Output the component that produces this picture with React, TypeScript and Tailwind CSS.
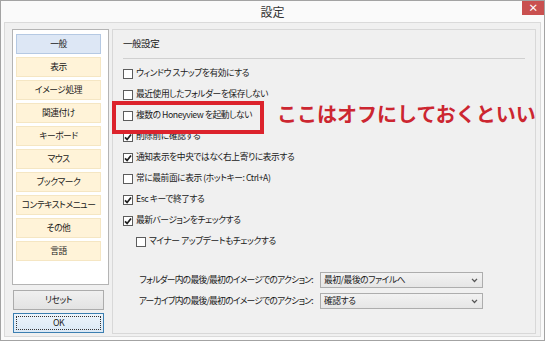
import type { ReactNode } from 'react'

const MENU = ['一般', '表示', 'イメージ処理', '関連付け', 'キーボード', 'マウス', 'ブックマーク', 'コンテキストメニュー', 'その他', '言語']

const OPTIONS: { label: ReactNode; checked: boolean; indent?: boolean }[] = [
  { label: 'ウィンドウ スナップを有効にする', checked: false },
  { label: '最近使用したフォルダーを保存しない', checked: false },
  { label: '複数の Honeyview を起動しない', checked: false },
  { label: '削除前に確認する', checked: true },
  { label: '通知表示を中央ではなく右上寄りに表示する', checked: true },
  { label: '常に最前面に表示 (ホットキー: Ctrl+A)', checked: false },
  { label: 'Esc キーで終了する', checked: true },
  { label: '最新バージョンをチェックする', checked: true },
  { label: 'マイナー アップデートもチェックする', checked: false, indent: true },
]

function CheckBox({ checked }: { checked: boolean }) {
  return (
    <span className="flex h-[10px] w-[10px] shrink-0 items-center justify-center border border-[#5c5c5c] bg-white">
      {checked && (
        <svg viewBox="0 0 8 8" className="h-[8px] w-[8px]">
          <path d="M1 4.3 L3.1 6.4 L7 1.4" stroke="#1f1f1f" strokeWidth="1.7" fill="none" />
        </svg>
      )}
    </span>
  )
}

function Select({ value }: { value: string }) {
  return (
    <div className="flex h-[16px] w-[163px] items-center justify-between border border-[#adadad] bg-gradient-to-b from-[#f2f2f2] to-[#e6e6e6] pl-[3px] pr-[4px]">
      <span className="whitespace-nowrap">{value}</span>
      <svg viewBox="0 0 8 6" className="h-[5px] w-[7px]">
        <path d="M1 1 L4 4.2 L7 1" stroke="#555" strokeWidth="1.5" fill="none" />
      </svg>
    </div>
  )
}

export default function App() {
  return (
    <div className="h-[346px] w-[550px] bg-white font-['Noto_Sans_CJK_JP','Noto_Sans',sans-serif] text-[8.75px] leading-none tracking-[-0.45px] text-[#1a1a1a] [font-feature-settings:'palt']">
      {/* window */}
      <div className="relative flex h-[341px] w-[545px] flex-col border border-[#a3a3a3] bg-[#fafafa] px-[3px] pb-[3px]">
        {/* title bar */}
        <div className="flex h-[21px] shrink-0 items-center justify-center text-[12px] tracking-normal text-[#333]">設定</div>
        <div className="absolute right-0 top-0 flex h-[14px] w-[22px] items-center justify-center bg-[#c9504f] text-[10px] font-bold text-white">
          ×
        </div>

        {/* client area */}
        <div className="flex flex-1 gap-[3px] border border-[#dadada] bg-[#f0f0f0] pb-[2px] pl-[7px] pr-[4px] pt-[6px]">
          {/* left column */}
          <div className="flex w-[97px] shrink-0 flex-col">
            <div className="flex h-[256px] flex-col gap-[3px] border border-[#b4b4b4] bg-white pl-[3px] pt-[4px]">
              {MENU.map((m, i) => (
                <div
                  key={m}
                  className={
                    i === 0
                      ? 'flex h-[20px] w-[85px] items-center justify-center border border-[#b5c9e3] bg-[#dde7f5]'
                      : 'flex h-[20px] w-[85px] items-center justify-center border border-[#f5e6c3] bg-[#fff3d8]'
                  }
                >
                  {m}
                </div>
              ))}
            </div>
            <div className="ml-[1px] mt-[5px] flex h-[20px] w-[91px] items-center justify-center border border-[#acacac] bg-gradient-to-b from-[#f0f0f0] to-[#e3e3e3]">
              リセット
            </div>
            <div className="ml-[1px] mt-[3px] flex h-[20px] w-[91px] items-center justify-center border border-[#3c7fb1] bg-gradient-to-b from-[#ecf4fb] to-[#dbe9f6] p-[2px]">
              <div className="flex h-full w-full items-center justify-center border border-dotted border-[#333]">OK</div>
            </div>
          </div>

          {/* content panel */}
          <div className="relative flex flex-1 flex-col border border-[#d8d8d8] pl-[10px] pr-[10px] pt-[7px]">
            <div className="flex h-[14px] items-center text-[9.5px]">一般設定</div>
            <div className="mt-[7px] h-px w-[402px] bg-[#d0d0d0]" />
            <div className="mt-[4px] flex flex-col">
              {OPTIONS.map((o, i) => (
                <div key={i} className={o.indent ? 'flex h-[21px] items-center gap-[3px] pl-[13px]' : 'flex h-[21px] items-center gap-[3px]'}>
                  <CheckBox checked={o.checked} />
                  <span className="whitespace-nowrap">{o.label}</span>
                </div>
              ))}
            </div>

            <div className="mt-[20px] grid grid-cols-[190px_163px] items-center gap-x-[7px] gap-y-[5px]">
              <span className="whitespace-nowrap text-right tracking-[-0.75px]">フォルダー内の最後/最初のイメージでのアクション:</span>
              <Select value="最初/最後のファイルへ" />
              <span className="whitespace-nowrap text-right tracking-[-0.75px]">アーカイブ内の最後/最初のイメージでのアクション:</span>
              <Select value="確認する" />
            </div>

            {/* annotation */}
            <div className="absolute left-[-1px] top-[71px] h-[33px] w-[152px] border-[4px] border-[#dc232c]" />
            <div className="absolute left-[164px] top-[73px] whitespace-nowrap text-[20px] font-bold leading-[22px] tracking-normal text-[#cc2630] [font-feature-settings:normal]">
              ここはオフにしておくといい
            </div>
          </div>
        </div>
      </div>
    </div>
  )
}
